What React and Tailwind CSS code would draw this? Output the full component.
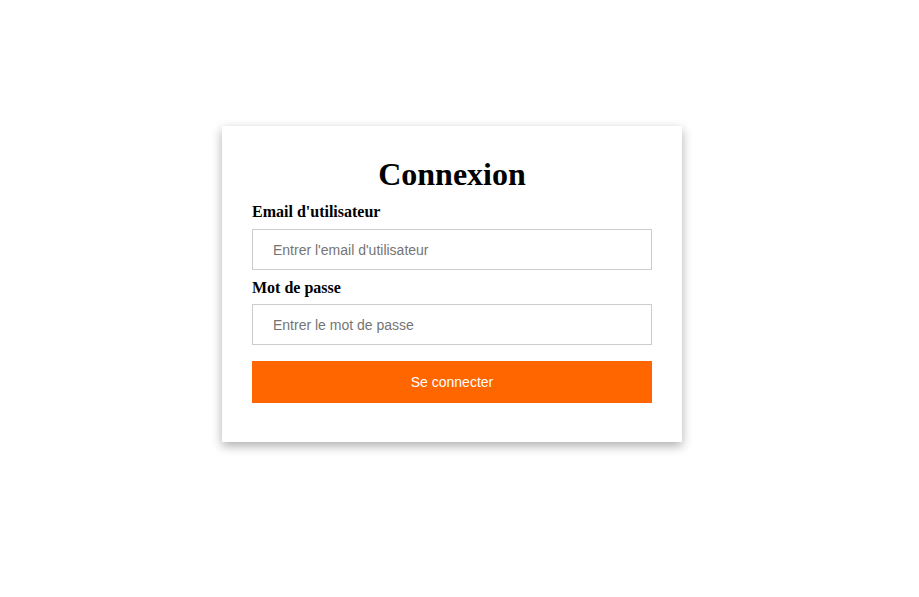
export default function App() {
  return (
    <div className="min-h-[597px] w-full bg-white" style={{ fontFamily: '"Liberation Serif", serif' }}>
      <div className="pl-[222px] pt-[126px]">
        <form
          className="w-[460px] bg-white px-[30px] pt-[30px] pb-[39px] shadow-[0_4px_10px_rgba(0,0,0,0.32)]"
          onSubmit={(e) => e.preventDefault()}
        >
          <h1 className="mb-[11px] text-center text-[32px] leading-[36px] font-bold text-black">Connexion</h1>
          <label className="mb-2 block text-base leading-[18px] font-bold text-black">Email d'utilisateur</label>
          <input
            type="email"
            placeholder="Entrer l'email d'utilisateur"
            className="mb-[9px] block h-[41px] w-full border border-[#cccccc] px-5 text-sm text-black outline-none placeholder:text-[#757575]"
            style={{ fontFamily: '"Liberation Sans", Arial, sans-serif' }}
          />
          <label className="mb-[7px] block text-base leading-[18px] font-bold text-black">Mot de passe</label>
          <input
            type="password"
            placeholder="Entrer le mot de passe"
            className="mb-4 block h-[41px] w-full border border-[#cccccc] px-5 text-sm text-black outline-none placeholder:text-[#757575]"
            style={{ fontFamily: '"Liberation Sans", Arial, sans-serif' }}
          />
          <button
            type="submit"
            className="block h-[42px] w-full bg-[#ff6600] text-sm text-white"
            style={{ fontFamily: '"Liberation Sans", Arial, sans-serif' }}
          >
            Se connecter
          </button>
        </form>
      </div>
    </div>
  );
}
